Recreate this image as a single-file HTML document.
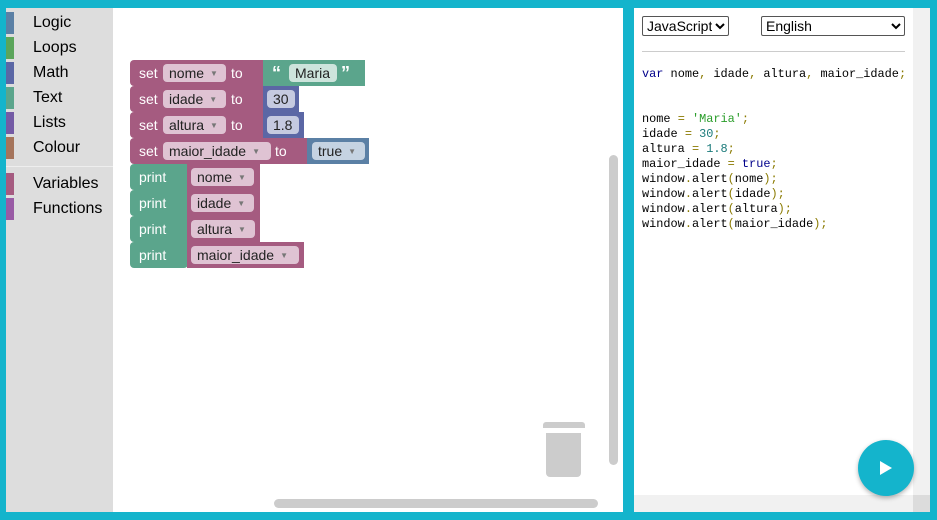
<!DOCTYPE html><html><head><style>
body{margin:0;width:937px;height:520px;background:#14b4cc;position:relative;overflow:hidden;font-family:"Liberation Sans",Arial,sans-serif}
.a{position:absolute}
#left{left:6px;top:8px;width:617px;height:504px;background:#fff}
#tb{left:0;top:0;width:107px;height:504px;background:#ddd}
.cat{position:absolute;left:0;height:22px;width:107px;font-size:16px;color:#000}
.cat i{position:absolute;left:0;top:0;width:8px;height:22px}
.cat span{position:absolute;left:27px;top:2px}
.b{position:absolute;height:26px;color:#fff;font-size:14px;box-sizing:border-box;border-radius:4px 0 0 4px}
.t{position:absolute;top:5px}
.p{position:absolute;top:4px;height:18px;border-radius:4px;color:#222;font-size:14px;line-height:18px;padding-left:6px;box-sizing:border-box}
.p s{text-decoration:none;font-size:8px;color:#777;margin-left:6px;vertical-align:2px}
.S{background:#a55b80}.G{background:#5ba58c}.M{background:#5b67a5}.L{background:#5b80a5}
.pk{background:#dfc3d3}
#right{left:634px;top:8px;width:296px;height:504px;background:#fff}
pre{margin:0;font-family:"Liberation Mono",monospace;font-size:11.9px;line-height:15px;color:#000}
.k{color:#00008b}.o{color:#8a7a00}.n{color:#1a7a7a}.s{color:#2a9d2a}
select{font-family:"Liberation Sans",Arial,sans-serif;font-size:14px;background:#fff;border:1px solid #555;border-radius:2px}
</style></head><body>
<div id="left" class="a">
<div id="tb" class="a">
<div class="cat" style="top:4px"><i style="background:#5b80a5"></i><span>Logic</span></div>
<div class="cat" style="top:29px"><i style="background:#5ba55b"></i><span>Loops</span></div>
<div class="cat" style="top:54px"><i style="background:#5b67a5"></i><span>Math</span></div>
<div class="cat" style="top:79px"><i style="background:#5ba58c"></i><span>Text</span></div>
<div class="cat" style="top:104px"><i style="background:#745ba5"></i><span>Lists</span></div>
<div class="cat" style="top:129px"><i style="background:#a5745b"></i><span>Colour</span></div>
<div style="position:absolute;top:158px;left:0;width:107px;height:1px;background:#eee"></div>
<div class="cat" style="top:165px"><i style="background:#a55b80"></i><span>Variables</span></div>
<div class="cat" style="top:190px"><i style="background:#995ba5"></i><span>Functions</span></div>
</div>
<div class="a" style="left:603px;top:147px;width:9px;height:310px;background:#ccc;border-radius:5px"></div>
<div class="a" style="left:268px;top:491px;width:324px;height:9px;background:#ccc;border-radius:5px"></div>
<div class="a" style="left:537px;top:414px;width:42px;height:6px;background:#ccc;border-radius:3px 3px 0 0"></div>
<div class="a" style="left:540px;top:425px;width:35px;height:44px;background:#ccc;border-radius:0 0 4px 4px"></div>
</div>
<div class="b S" style="left:130px;top:60px;width:134px"><span class="t" style="left:9px">set</span><div class="p pk" style="left:33px;width:63px">nome<s>▼</s></div><span class="t" style="left:101px">to</span></div>
<div class="b G" style="left:263px;top:60px;width:102px;border-radius:0"><span class="t" style="left:9px;font-weight:bold;font-size:18px;top:3px">“</span><div class="p" style="left:26px;width:48px;background:#cde4dc">Maria</div><span class="t" style="left:78px;font-weight:bold;font-size:18px;top:3px">”</span></div>
<div class="b S" style="left:130px;top:86px;width:134px"><span class="t" style="left:9px">set</span><div class="p pk" style="left:33px;width:63px">idade<s>▼</s></div><span class="t" style="left:101px">to</span></div>
<div class="b M" style="left:263px;top:86px;width:36px;border-radius:0"><div class="p" style="left:4px;width:28px;background:#c5cae0">30</div></div>
<div class="b S" style="left:130px;top:112px;width:134px"><span class="t" style="left:9px">set</span><div class="p pk" style="left:33px;width:63px">altura<s>▼</s></div><span class="t" style="left:101px">to</span></div>
<div class="b M" style="left:263px;top:112px;width:41px;border-radius:0"><div class="p" style="left:4px;width:32px;background:#c5cae0">1.8</div></div>
<div class="b S" style="left:130px;top:138px;width:178px"><span class="t" style="left:9px">set</span><div class="p pk" style="left:33px;width:108px">maior_idade<s>▼</s></div><span class="t" style="left:145px">to</span></div>
<div class="b L" style="left:307px;top:138px;width:62px;border-radius:0"><div class="p" style="left:5px;width:53px;background:#c5d3e2">true<s>▼</s></div></div>
<div class="b G" style="left:130px;top:164px;width:58px"><span class="t" style="left:9px">print</span></div>
<div class="b S" style="left:187px;top:164px;width:73px;border-radius:0"><div class="p pk" style="left:4px;width:63px">nome<s>▼</s></div></div>
<div class="b G" style="left:130px;top:190px;width:58px"><span class="t" style="left:9px">print</span></div>
<div class="b S" style="left:187px;top:190px;width:73px;border-radius:0"><div class="p pk" style="left:4px;width:63px">idade<s>▼</s></div></div>
<div class="b G" style="left:130px;top:216px;width:58px"><span class="t" style="left:9px">print</span></div>
<div class="b S" style="left:187px;top:216px;width:73px;border-radius:0"><div class="p pk" style="left:4px;width:64px">altura<s>▼</s></div></div>
<div class="b G" style="left:130px;top:242px;width:58px;border-radius:4px 0 4px 4px"><span class="t" style="left:9px">print</span></div>
<div class="b S" style="left:187px;top:242px;width:117px;border-radius:0"><div class="p pk" style="left:4px;width:108px">maior_idade<s>▼</s></div></div>

<div id="right" class="a">
<select class="a" style="left:8px;top:8px;width:87px;height:20px"><option>JavaScript</option></select>
<select class="a" style="left:127px;top:8px;width:144px;height:20px"><option>English</option></select>
<div class="a" style="left:8px;top:43px;width:263px;height:1px;background:#ccc"></div>
<pre class="a" style="left:8px;top:59px"><span class="k">var</span> nome<span class="o">,</span> idade<span class="o">,</span> altura<span class="o">,</span> maior_idade<span class="o">;</span></pre>
<pre class="a" style="left:8px;top:104px">nome <span class="o">=</span> <span class="s">'Maria'</span><span class="o">;</span>
idade <span class="o">=</span> <span class="n">30</span><span class="o">;</span>
altura <span class="o">=</span> <span class="n">1.8</span><span class="o">;</span>
maior_idade <span class="o">=</span> <span class="k">true</span><span class="o">;</span>
window<span class="o">.</span>alert<span class="o">(</span>nome<span class="o">);</span>
window<span class="o">.</span>alert<span class="o">(</span>idade<span class="o">);</span>
window<span class="o">.</span>alert<span class="o">(</span>altura<span class="o">);</span>
window<span class="o">.</span>alert<span class="o">(</span>maior_idade<span class="o">);</span></pre>
<div class="a" style="left:279px;top:0;width:17px;height:487px;background:#f1f1f1"></div>
<div class="a" style="left:0;top:487px;width:279px;height:17px;background:#f1f1f1"></div>
<div class="a" style="left:279px;top:487px;width:17px;height:17px;background:#dcdcdc"></div>
<div class="a" style="left:224px;top:432px;width:56px;height:56px;border-radius:50%;background:#14b4cc;box-shadow:0 2px 5px rgba(0,0,0,.3)"></div>
<svg class="a" style="left:244px;top:451px" width="16" height="18"><path d="M2 2 L14 9 L2 16Z" fill="#fff"/></svg>
</div>
</body></html>
